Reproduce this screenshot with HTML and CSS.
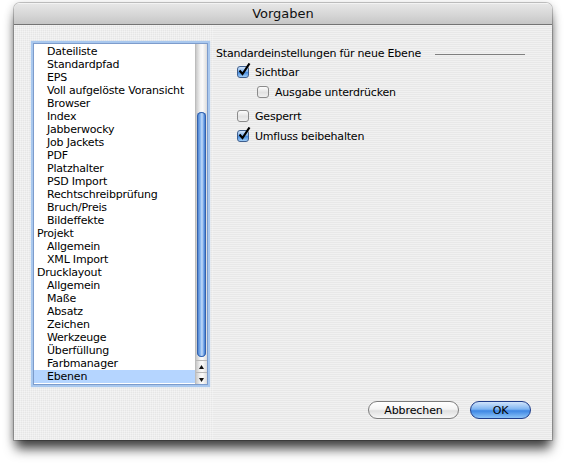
FILE: index.html
```html
<!DOCTYPE html>
<html>
<head>
<meta charset="utf-8">
<title>Vorgaben</title>
<link rel="stylesheet" href="styles.css">
</head>
<body>
<div class="window">
  <div class="titlebar">Vorgaben</div>
  <div class="content">
    <div class="sidebar">
      <div class="listbox">
        <ul class="list">
          <li class="sub">Dateiliste</li>
          <li class="sub">Standardpfad</li>
          <li class="sub">EPS</li>
          <li class="sub">Voll aufgelöste Voransicht</li>
          <li class="sub">Browser</li>
          <li class="sub">Index</li>
          <li class="sub">Jabberwocky</li>
          <li class="sub">Job Jackets</li>
          <li class="sub">PDF</li>
          <li class="sub">Platzhalter</li>
          <li class="sub">PSD Import</li>
          <li class="sub">Rechtschreibprüfung</li>
          <li class="sub">Bruch/Preis</li>
          <li class="sub">Bildeffekte</li>
          <li class="top">Projekt</li>
          <li class="sub">Allgemein</li>
          <li class="sub">XML Import</li>
          <li class="top">Drucklayout</li>
          <li class="sub">Allgemein</li>
          <li class="sub">Maße</li>
          <li class="sub">Absatz</li>
          <li class="sub">Zeichen</li>
          <li class="sub">Werkzeuge</li>
          <li class="sub">Überfüllung</li>
          <li class="sub">Farbmanager</li>
          <li class="sub selected">Ebenen</li>
        </ul>
        <div class="scrollbar">
          <div class="track">
            <div class="thumb"></div>
          </div>
          <div class="arrow">
            <svg width="11" height="10" viewBox="0 0 11 10"><path d="M3 7 L8 7 L5.5 3 Z" fill="#111"/></svg>
          </div>
          <div class="arrow">
            <svg width="11" height="10" viewBox="0 0 11 10"><path d="M3 4 L8 4 L5.5 8 Z" fill="#111"/></svg>
          </div>
        </div>
      </div>
    </div>
    <div class="panel">
      <div class="group-head">
        <span class="group-title">Standardeinstellungen für neue Ebene</span>
        <span class="group-line"></span>
      </div>
      <label class="row r1"><span class="cb checked"><svg class="tick" width="14" height="14" viewBox="0 0 14 14"><path d="M2.5 7.5 L5.5 11 L12.5 0.5" fill="none" stroke="#000" stroke-width="2.2" stroke-linejoin="miter"/></svg></span>Sichtbar</label>
      <label class="row r2 indent"><span class="cb"></span>Ausgabe unterdrücken</label>
      <label class="row r3"><span class="cb"></span>Gesperrt</label>
      <label class="row r4"><span class="cb checked"><svg class="tick" width="14" height="14" viewBox="0 0 14 14"><path d="M2.5 7.5 L5.5 11 L12.5 0.5" fill="none" stroke="#000" stroke-width="2.2" stroke-linejoin="miter"/></svg></span>Umfluss beibehalten</label>
      <div class="buttons">
        <button class="btn cancel">Abbrechen</button>
        <button class="btn ok">OK</button>
      </div>
    </div>
  </div>
</div>
</body>
</html>
```

FILE: styles.css
```css
html, body {
  margin: 0;
  padding: 0;
  background: #ffffff;
}
body {
  font-family: "DejaVu Sans", "Liberation Sans", sans-serif;
  font-size: 11px;
  letter-spacing: -0.2px;
  color: #000;
  padding: 3px 0 0 14px;
  height: 463px;
  box-sizing: border-box;
}
.window {
  width: 538px;
  height: 437px;
  border-radius: 6px 6px 0 0;
  box-shadow: 0 11px 12px -2px rgba(0,0,0,0.7), 0 2px 10px rgba(0,0,0,0.25), 0 0 0 1px rgba(0,0,0,0.2);
  display: flex;
  flex-direction: column;
  overflow: hidden;
}
.titlebar {
  height: 20px;
  line-height: 20px;
  text-align: center;
  font-size: 13px;
  letter-spacing: 0;
  background: linear-gradient(#e6e6e6, #d4d4d4 60%, #c6c6c6);
  border-bottom: 1px solid #747474;
  border-top: 1px solid #f3f3f3;
  color: #111;
}
.content {
  flex: 1;
  display: flex;
  background: repeating-linear-gradient(to bottom, #f1f1f1 0 1px, #e8e8e8 1px 2px);
}
.sidebar {
  padding: 18px 5px 0 19px;
  background:
    repeating-linear-gradient(90deg, rgba(255,255,255,0.35) 0 1px, transparent 1px 2px),
    repeating-linear-gradient(to bottom, #eeeeee 0 1px, #e6e6e6 1px 2px);
}
.listbox {
  width: 173px;
  height: 340px;
  border: 1px solid #7d9ccc;
  box-shadow: 0 0 1px 2px #a9c8ee;
  background: #fff;
  display: flex;
}
.list {
  list-style: none;
  margin: 0;
  padding: 1px 0 0 0;
  flex: 1;
}
.list li {
  height: 13px;
  line-height: 13px;
  white-space: nowrap;
}
.list .sub { padding-left: 13px; }
.list .top { padding-left: 3px; }
.list .selected { background: #b5d5ff; }
.scrollbar {
  width: 11px;
  display: flex;
  flex-direction: column;
  background: linear-gradient(to right, #c9c9c9, #f4f4f4 40%, #fafafa 60%, #dcdcdc);
  border-left: 1px solid #bdbdbd;
}
.track {
  flex: 1;
  padding-top: 68px;
  padding-bottom: 3px;
  border-radius: 5px 5px 0 0;
  display: flex;
  flex-direction: column;
}
.thumb {
  flex: 1;
  border-radius: 5px;
  margin: 0 1px;
  background: linear-gradient(to right, #3a6fc3, #7fb1ee 35%, #c4dcf9 55%, #5b93e0 80%, #2f62b4);
  box-shadow: inset 0 0 0 1px #3362ad;
}
.arrow {
  height: 11px;
  border-top: 1px solid #b8b8b8;
  display: flex;
  align-items: center;
}
.arrow svg { display: block; }
.panel {
  flex: 1;
  margin-left: 3px;
  padding: 18px 21px 21px 0;
  display: flex;
  flex-direction: column;
}
.group-head {
  display: flex;
  align-items: center;
  height: 14px;
  margin-top: 3px;
}
.group-title { white-space: nowrap; }
.group-line {
  flex: 1;
  height: 1px;
  background: #7f7f7f;
  margin: 2px 6px 0 14px;
}
.row {
  display: flex;
  align-items: center;
  height: 14px;
  padding-left: 21px;
}
.row.indent { padding-left: 41px; }
.r1 { margin-top: 5px; }
.r2 { margin-top: 6px; }
.r3 { margin-top: 10px; }
.r4 { margin-top: 6px; }
.cb {
  position: relative;
  width: 10px;
  height: 10px;
  border: 1px solid #8b8b8b;
  border-radius: 3px;
  background: linear-gradient(#fdfdfd, #e2e2e2 55%, #f0f0f0);
  margin-right: 6px;
  flex: none;
}
.cb.checked {
  border-color: #3f5f8e;
  background: linear-gradient(#d4e6fb, #7cb1ee 45%, #4a8ee0 55%, #9ccbf7);
}
.tick {
  position: absolute;
  left: -1px;
  top: -4px;
}
.buttons {
  margin-top: auto;
  display: flex;
  justify-content: flex-end;
  gap: 11px;
}
.btn {
  height: 18px;
  border-radius: 9px;
  font-family: "DejaVu Sans", "Liberation Sans", sans-serif;
  font-size: 11px;
  letter-spacing: -0.1px;
  padding: 0;
  color: #000;
}
.cancel {
  width: 91px;
  border: 1px solid #7c7c7c;
  background: linear-gradient(#ffffff, #f4f4f4 45%, #e0e0e0 55%, #f7f7f7);
}
.ok {
  width: 61px;
  border: 1px solid #1f3d8a;
  background: linear-gradient(#d0e4fb, #7fb5f2 45%, #3d86e4 55%, #8cc3f8);
}
```
